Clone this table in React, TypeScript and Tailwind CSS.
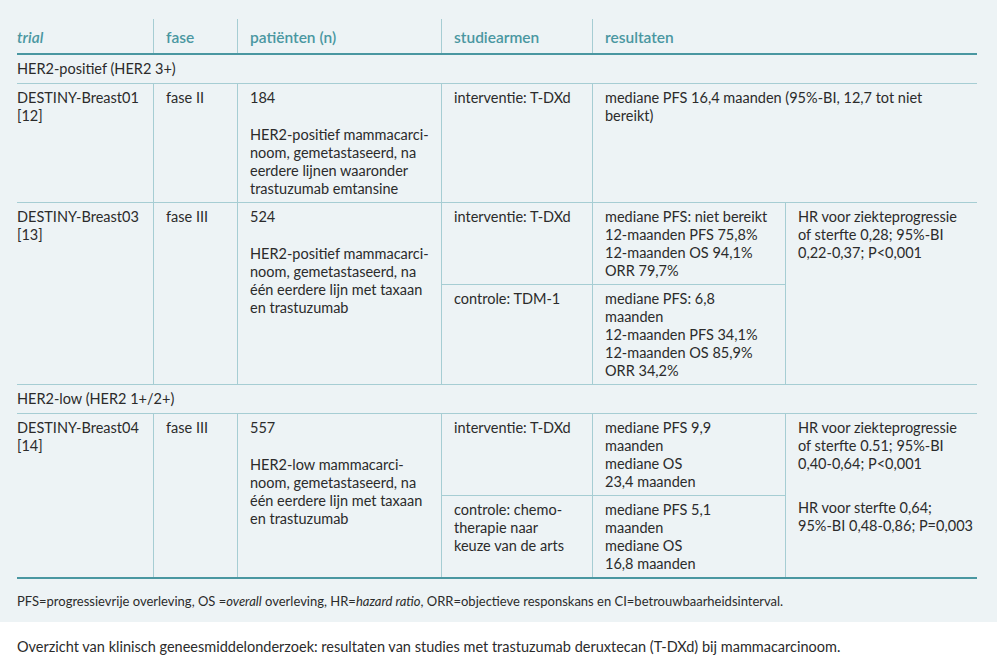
import React from "react";

const line = "bg-[#a6cdd3]";
const cell = "bg-[#edf3f5] pl-3 pr-2 pt-[5px] pb-[4px] whitespace-nowrap";
const head = "bg-[#edf3f5] pl-3 pt-[9px] pb-[7px] font-semibold text-[15.5px] text-[#4a97a1]";

function Lines({ items }: { items: string[] }) {
  return (
    <>
      {items.map((t, i) => (
        <div key={i}>{t}</div>
      ))}
    </>
  );
}

function GroupRow({ label }: { label: string }) {
  return <div className="col-span-6 bg-[#edf3f5] h-[28px] flex items-center">{label}</div>;
}

export default function App() {
  const cols = "grid grid-cols-[136px_83px_203px_150px_192px_1fr]";

  return (
    <div className="w-[1000px] h-[663px] bg-white text-[#2b2b2b] font-['Lato','Liberation_Sans',sans-serif] text-[14.5px] leading-[18px]">
      <div className="w-[997px] bg-[#edf3f5] pt-[19px] pb-[13px]">
        <div className="ml-[17px] w-[960px]">
          {/* header */}
          <div className={`${cols} gap-x-px ${line}`}>
            <div className={`${head} !pl-0 italic`}>trial</div>
            <div className={head}>fase</div>
            <div className={head}>patiënten (n)</div>
            <div className={head}>studiearmen</div>
            <div className={`${head} col-span-2`}>resultaten</div>
          </div>
          <div className="h-[2px] bg-[#4a97a1]" />

          {/* body */}
          <div className={`${cols} gap-px ${line}`}>
            <GroupRow label="HER2-positief (HER2 3+)" />

            <div className={`${cell} !pl-0`}>
              <Lines items={["DESTINY-Breast01", "[12]"]} />
            </div>
            <div className={cell}>fase II</div>
            <div className={cell}>
              <div>184</div>
              <div className="mt-[19px]">
                <Lines items={["HER2-positief mammacarci-", "noom, gemetastaseerd, na", "eerdere lijnen waaronder", "trastuzumab emtansine"]} />
              </div>
            </div>
            <div className={cell}>interventie: T-DXd</div>
            <div className={`${cell} col-span-2`}>
              <Lines items={["mediane PFS 16,4 maanden (95%-BI, 12,7 tot niet", "bereikt)"]} />
            </div>

            <div className={`${cell} !pl-0 row-span-2`}>
              <Lines items={["DESTINY-Breast03", "[13]"]} />
            </div>
            <div className={`${cell} row-span-2`}>fase III</div>
            <div className={`${cell} row-span-2`}>
              <div>524</div>
              <div className="mt-[19px]">
                <Lines items={["HER2-positief mammacarci-", "noom, gemetastaseerd, na", "één eerdere lijn met taxaan", "en trastuzumab"]} />
              </div>
            </div>
            <div className={cell}>interventie: T-DXd</div>
            <div className={cell}>
              <Lines items={["mediane PFS: niet bereikt", "12-maanden PFS 75,8%", "12-maanden OS 94,1%", "ORR 79,7%"]} />
            </div>
            <div className={`${cell} row-span-2`}>
              <Lines items={["HR voor ziekteprogressie", "of sterfte 0,28; 95%-BI", "0,22-0,37; P<0,001"]} />
            </div>
            <div className={cell}>controle: TDM-1</div>
            <div className={cell}>
              <Lines items={["mediane PFS: 6,8", "maanden", "12-maanden PFS 34,1%", "12-maanden OS 85,9%", "ORR 34,2%"]} />
            </div>

            <GroupRow label="HER2-low (HER2 1+/2+)" />

            <div className={`${cell} !pl-0 row-span-2`}>
              <Lines items={["DESTINY-Breast04", "[14]"]} />
            </div>
            <div className={`${cell} row-span-2`}>fase III</div>
            <div className={`${cell} row-span-2`}>
              <div>557</div>
              <div className="mt-[19px]">
                <Lines items={["HER2-low mammacarci-", "noom, gemetastaseerd, na", "één eerdere lijn met taxaan", "en trastuzumab"]} />
              </div>
            </div>
            <div className={cell}>interventie: T-DXd</div>
            <div className={cell}>
              <Lines items={["mediane PFS 9,9", "maanden", "mediane OS", "23,4 maanden"]} />
            </div>
            <div className={`${cell} row-span-2`}>
              <Lines items={["HR voor ziekteprogressie", "of sterfte 0.51; 95%-BI", "0,40-0,64; P<0,001"]} />
              <div className="mt-[26px]">
                <Lines items={["HR voor sterfte 0,64;", "95%-BI 0,48-0,86; P=0,003"]} />
              </div>
            </div>
            <div className={cell}>
              <Lines items={["controle: chemo-", "therapie naar", "keuze van de arts"]} />
            </div>
            <div className={cell}>
              <Lines items={["mediane PFS 5,1", "maanden", "mediane OS", "16,8 maanden"]} />
            </div>
          </div>
          <div className="h-[2px] bg-[#4a97a1]" />

          <p className="mt-[14px] text-[13px] leading-[16px]">
            PFS=progressievrije overleving, OS =<i>overall</i> overleving, HR=<i>hazard ratio</i>, ORR=objectieve responskans en CI=betrouwbaarheidsinterval.
          </p>
        </div>
      </div>
      <p className="ml-[17px] mt-[15px] text-[14.5px] leading-[20px]">
        Overzicht van klinisch geneesmiddelonderzoek: resultaten van studies met trastuzumab deruxtecan (T-DXd) bij mammacarcinoom.
      </p>
    </div>
  );
}
